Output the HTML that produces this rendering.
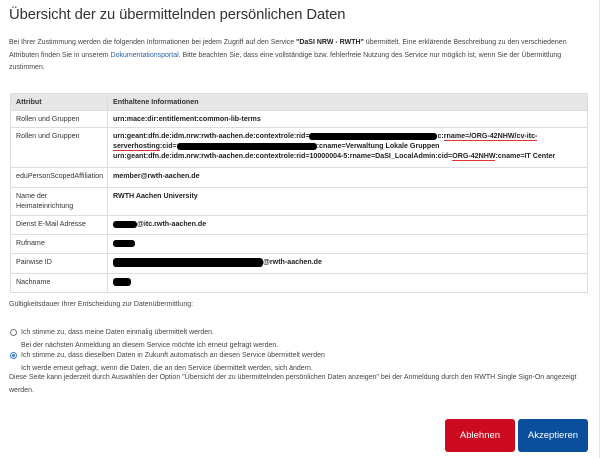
<!DOCTYPE html>
<html><head><meta charset="utf-8"><style>
*{margin:0;padding:0;box-sizing:border-box}
body{width:605px;height:458px;background:#fff;font-family:"Liberation Sans",sans-serif;color:#333;position:relative;overflow:hidden}
.a{position:absolute;white-space:nowrap}
h1{position:absolute;left:9px;top:7px;font-size:14.8px;font-weight:normal;color:#333;letter-spacing:-0.1px}
.p{font-size:7px;line-height:12.5px;color:#444}
table{position:absolute;left:10px;top:93px;width:578px;border-collapse:collapse;font-size:7.1px;table-layout:fixed}
td,th{border:1px solid #ddd;vertical-align:top;padding:3px 5px;text-align:left;line-height:10px;overflow:hidden}
th{background:#e6e6e6;font-weight:bold;padding-top:3px}
td.b{font-weight:bold;color:#222;white-space:nowrap}
.k{display:inline-block;background:#000;border-radius:3px;vertical-align:middle}
.u{border-bottom:1px solid #d33}
.r{position:absolute;width:7px;height:7px;border:1px solid #777;border-radius:50%;left:10px}
.btn{position:absolute;top:419px;height:33px;border-radius:3px;color:#fff;font-size:9.5px;text-align:center;line-height:33px}
</style></head><body>
<div class="a" style="left:599px;top:0;width:1px;height:458px;background:#e3e3e3"></div>
<h1>Übersicht der zu übermittelnden persönlichen Daten</h1>
<div class="a p" style="left:9px;top:37px;white-space:normal;width:572px">Bei Ihrer Zustimmung werden die folgenden Informationen bei jedem Zugriff auf den Service <b style="color:#222">"DaSI NRW - RWTH"</b> übermittelt. Eine erklärende Beschreibung zu den verschiedenen Attributen finden Sie in unserem <span style="color:#2a62a8">Dokumentationsportal</span>. Bitte beachten Sie, dass eine vollständige bzw. fehlerfreie Nutzung des Service nur möglich ist, wenn Sie der Übermittlung zustimmen.</div>
<table>
<colgroup><col style="width:97px"><col></colgroup>
<tr style="height:14px"><th>Attribut</th><th>Enthaltene Informationen</th></tr>
<tr style="height:16px"><td>Rollen und Gruppen</td><td class="b">urn:mace:dir:entitlement:common-lib-terms</td></tr>
<tr style="height:40px"><td>Rollen und Gruppen</td><td class="b">urn:geant:dfn.de:idm.nrw:rwth-aachen.de:contextrole:rid=<span class="k" style="width:128px;height:7px"></span>c:<span class="u">rname=/ORG-42NHW/cv-itc-</span><br><span class="u">serverhosting</span>:cid=<span class="k" style="width:140px;height:7px"></span>:cname=Verwaltung Lokale Gruppen<br>urn:geant:dfn.de:idm.nrw:rwth-aachen.de:contextrole:rid=10000004-5:rname=DaSI_LocalAdmin:cid=<span class="u">ORG-42NHW</span>:cname=IT Center</td></tr>
<tr style="height:20px"><td>eduPersonScopedAffiliation</td><td class="b">member@rwth-aachen.de</td></tr>
<tr style="height:28px"><td>Name der<br>Heimateinrichtung</td><td class="b">RWTH Aachen University</td></tr>
<tr style="height:19px"><td>Dienst E-Mail Adresse</td><td class="b"><span class="k" style="width:24px;height:7px"></span>@itc.rwth-aachen.de</td></tr>
<tr style="height:19px"><td>Rufname</td><td class="b"><span class="k" style="width:22px;height:7px"></span></td></tr>
<tr style="height:20px"><td>Pairwise ID</td><td class="b"><span class="k" style="width:150px;height:9px"></span>@rwth-aachen.de</td></tr>
<tr style="height:19px"><td>Nachname</td><td class="b"><span class="k" style="width:18px;height:8px"></span></td></tr>
</table>
<div class="a p" style="left:9px;top:299px">Gültigkeitsdauer Ihrer Entscheidung zur Datenübermittlung:</div>
<div class="r" style="top:329px"></div>
<div class="a p" style="left:21px;top:326px;line-height:13px">Ich stimme zu, dass meine Daten einmalig übermittelt werden.<br>Bei der nächsten Anmeldung an diesem Service möchte ich erneut gefragt werden.</div>
<div class="r" style="top:352px;border-color:#3a7bd5"><div style="position:absolute;left:1px;top:1px;width:3px;height:3px;border-radius:50%;background:#3a7bd5"></div></div>
<div class="a p" style="left:21px;top:349px;line-height:13px">Ich stimme zu, dass dieselben Daten in Zukunft automatisch an diesen Service übermittelt werden<br>Ich werde erneut gefragt, wenn die Daten, die an den Service übermittelt werden, sich ändern.</div>
<div class="a p" style="left:9px;top:372px;white-space:normal;width:580px">Diese Seite kann jederzeit durch Auswählen der Option "Übersicht der zu übermittelnden persönlichen Daten anzeigen" bei der Anmeldung durch den RWTH Single Sign-On angezeigt werden.</div>
<div class="btn" style="left:445px;width:70px;background:#cc0a20">Ablehnen</div>
<div class="btn" style="left:518px;width:70px;background:#0a4f9c">Akzeptieren</div>
</body></html>
